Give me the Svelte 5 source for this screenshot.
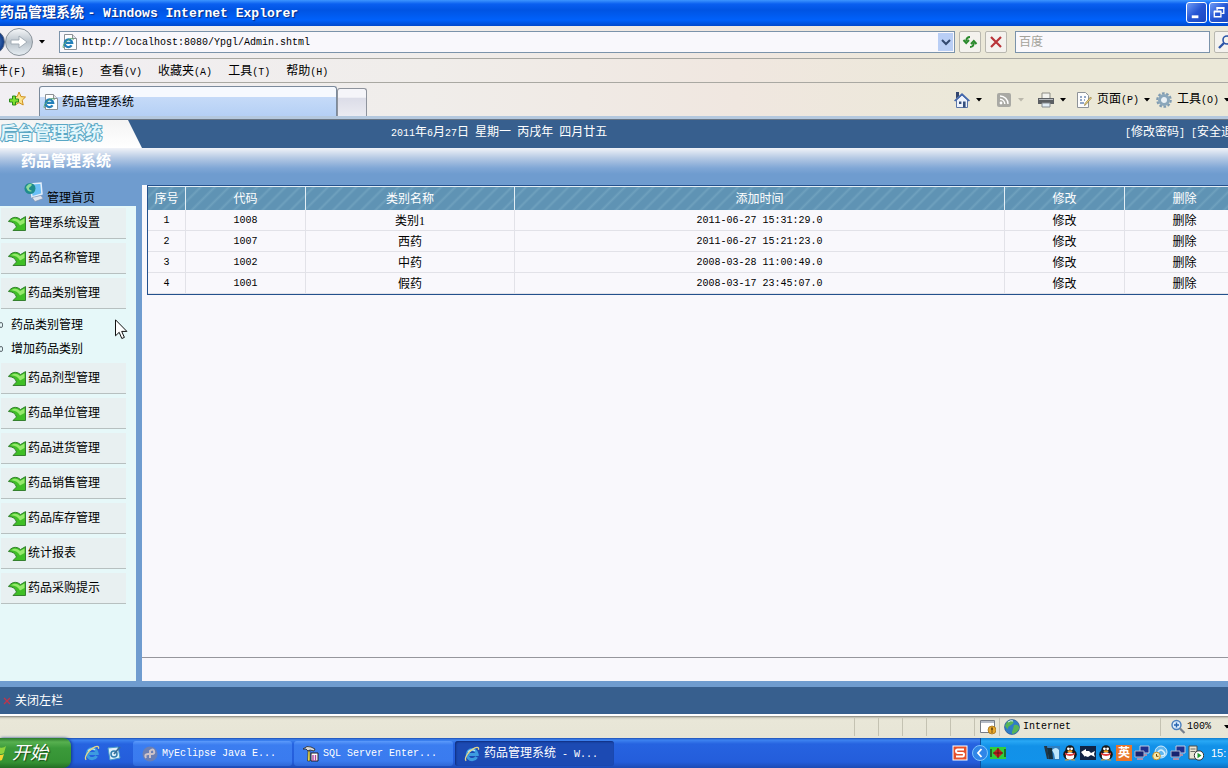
<script>
  const menus = [
    ['件', '(F)'],
    ['编辑', '(E)'],
    ['查看', '(V)'],
    ['收藏夹', '(A)'],
    ['工具', '(T)'],
    ['帮助', '(H)']
  ];

  const columns = ['序号', '代码', '类别名称', '添加时间', '修改', '删除'];

  const rows = [
    { code: '1008', name: '类别1', time: '2011-06-27 15:31:29.0' },
    { code: '1007', name: '西药', time: '2011-06-27 15:21:23.0' },
    { code: '1002', name: '中药', time: '2008-03-28 11:00:49.0' },
    { code: '1001', name: '假药', time: '2008-03-17 23:45:07.0' }
  ];

  let sections = $state([
    { title: '管理系统设置', open: false, items: [] },
    { title: '药品名称管理', open: false, items: [] },
    { title: '药品类别管理', open: true, items: ['药品类别管理', '增加药品类别'] },
    { title: '药品剂型管理', open: false, items: [] },
    { title: '药品单位管理', open: false, items: [] },
    { title: '药品进货管理', open: false, items: [] },
    { title: '药品销售管理', open: false, items: [] },
    { title: '药品库存管理', open: false, items: [] },
    { title: '统计报表', open: false, items: [] },
    { title: '药品采购提示', open: false, items: [] }
  ]);

  let address = $state('http://localhost:8080/Ypgl/Admin.shtml');
  let keyword = $state('');
  let showSidebar = $state(true);
</script>

{#snippet ieLogo()}
  <svg class="icon" viewBox="0 0 16 16" aria-hidden="true">
    <path d="M12.6 11A5 5 0 1 1 13.2 8.4H5" fill="none" stroke="#3d9be0" stroke-width="3" />
    <path d="M4 5.8A5 5 0 0 1 11 4.8" fill="none" stroke="#b5e6fa" stroke-width="1.3" />
    <path d="M2.2 14.8C-.2 12.6 3.6 6.6 8.4 3.4 11.8 1 15.4.4 14.4 3.8" fill="none" stroke="#e6d789" stroke-width="1.3" />
  </svg>
{/snippet}

{#snippet pageLogo()}
  <svg class="icon" viewBox="0 0 16 16" aria-hidden="true">
    <path d="M2.5.5h8l4 4v11h-12z" fill="#fff" stroke="#8c9196" />
    <path d="M10.5.5v4h4" fill="#dfe3e8" stroke="#8c9196" />
    <path d="M9.6 11.4A3.8 3.8 0 1 1 10.2 8.8H4" fill="none" stroke="#237fb9" stroke-width="2.2" />
    <path d="M1.6 14C0 12.400 3 8 6.600 5.600 9.400 4 11.800 4 11 6" fill="none" stroke="#54a36a" />
  </svg>
{/snippet}

{#snippet caret()}
  <svg class="caret" viewBox="0 0 6 4" aria-hidden="true"><path d="M0 0h6L3 3.5z" /></svg>
{/snippet}

{#snippet penguin()}
  <svg class="icon" viewBox="0 0 16 16" aria-hidden="true">
    <ellipse cx="8" cy="9.500" rx="6.800" ry="5.500" fill="#181818" />
    <ellipse cx="8" cy="5" rx="4.600" ry="4.800" fill="#181818" />
    <ellipse cx="8" cy="11" rx="4.200" ry="3.800" fill="#fff" />
    <circle cx="6.400" cy="3.800" r="1.400" fill="#fff" /><circle cx="9.600" cy="3.800" r="1.400" fill="#fff" />
    <ellipse cx="8" cy="6.300" rx="2.600" ry="1" fill="#f6a21b" />
    <path d="M3 7.400c3 2.200 7 2.200 10 0v2.200c-3 1.800-7 1.800-10 0z" fill="#e23b3b" />
    <path d="M2.500 15.500q2-2.500 5-.2zM8.500 15.300q3-2.300 5 .2z" fill="#f6a21b" />
  </svg>
{/snippet}

{#snippet monitors()}
  <svg class="icon" viewBox="0 0 16 16" aria-hidden="true">
    <path d="M6 1h9v7H6z" fill="#1d2f8e" stroke="#c3cbe0" />
    <path d="M1 6h9v6H1z" fill="#17236f" stroke="#aab4cf" />
    <path d="M3 14h6M10 10h3" stroke="#d78f9c" stroke-width="1.6" />
  </svg>
{/snippet}

<div class="screen">
  <header class="titlebar">
    <h1>药品管理系统 <span class="en">- Windows Internet Explorer</span></h1>
    <div class="window-buttons">
      <button aria-label="最小化">
        <svg viewBox="0 0 20 20"><path d="M5 14.5h7" stroke="#fff" stroke-width="3" /></svg>
      </button>
      <button aria-label="还原">
        <svg viewBox="0 0 20 20" fill="none" stroke="#fff">
          <path d="M7.5 8V5h7v6H12" stroke-width="1.4" /><path d="M7 5.2h8M4 9h8" stroke-width="2" /><path d="M4.5 9v5.5h7V9" stroke-width="1.4" />
        </svg>
      </button>
    </div>
  </header>

  <div class="chrome">
    <div class="address-row">
      <div class="nav-buttons">
        <button class="back" aria-label="后退"></button>
        <button class="forward" aria-label="前进">
          <svg viewBox="0 0 24 24"><path d="M4 10h8V6l8 6-8 6v-4H4z" fill="#fff" stroke="#a3adb6" /></svg>
        </button>
        <button class="history" aria-label="最近的网页">{@render caret()}</button>
      </div>
      <div class="address">
        {@render pageLogo()}
        <input class="en" aria-label="地址" bind:value={address} />
        <button aria-label="显示地址栏下拉列表">
          <svg viewBox="0 0 10 10"><path d="M1 3l4 4 4-4" fill="none" stroke="#33496f" stroke-width="2" /></svg>
        </button>
      </div>
      <button class="tool" aria-label="刷新">
        <svg viewBox="0 0 16 16" fill="none" stroke="#2b8a2d" stroke-width="2">
          <path d="M8 3Q4.500 3 4.200 7" /><path d="M1.500 6l2.700 3L7 6" />
          <path d="M8 13q3.500 0 3.800-4" /><path d="M9 10l2.800-3 2.700 3" />
        </svg>
      </button>
      <button class="tool" aria-label="停止">
        <svg viewBox="0 0 16 16"><path d="M3 3l10 10M13 3L3 13" stroke="#b93438" stroke-width="2.2" /></svg>
      </button>
      <input class="search" aria-label="搜索" placeholder="百度" bind:value={keyword} />
      <button class="tool go" aria-label="搜索网页">
        <svg viewBox="0 0 16 16" fill="none" stroke="#2c55a8"><circle cx="10" cy="6" r="4" stroke-width="1.6" /><path d="M7 9l-5 5" stroke-width="2.4" /></svg>
      </button>
    </div>

    <nav class="menubar" aria-label="菜单栏">
      {#each menus as [label, key]}
        <button>{label}<span class="en">{key}</span></button>
      {/each}
    </nav>

    <div class="tab-row">
      <button class="favorite" aria-label="添加到收藏夹">
        <svg viewBox="0 0 18 18">
          <path d="M11 1l2 4.6 4.5.4-3.3 3.2 1 4.8-4.2-2.4-3.7 2.4.8-5L5 6l4.3-.6z" fill="#fbe38a" stroke="#cf8f1b" />
          <path d="M4.5 5h3v3h3v3h-3v3h-3v-3h-3V8h3z" fill="#7de02e" stroke="#2b8a1e" />
        </svg>
      </button>
      <div class="tabs" role="tablist">
        <button class="tab" role="tab" aria-selected="true">{@render pageLogo()}药品管理系统</button>
        <button class="new-tab" aria-label="新选项卡"></button>
      </div>
      <div class="commands">
        <button aria-label="主页">
          <svg class="icon" viewBox="0 0 16 16">
            <path d="M2.5 8v7.5h11V8L8 3z" fill="#eef3fc" stroke="#5b76a8" />
            <path d="M0 8.5l8-7.5 8 7.5-1.2 1L8 3.6 1.2 9.5z" fill="#4468ad" />
            <path d="M2 0h3v4L2 6.500z" fill="#33466e" /><path d="M5 9.5h2.4V12H5zM9 9.5h2.6v6H9z" fill="#35507f" />
          </svg>
          {@render caret()}
        </button>
        <button aria-label="源" disabled>
          <svg class="icon" viewBox="0 0 16 16">
            <rect x="1" y="1" width="14" height="14" rx="2" fill="#a9a9a4" />
            <circle cx="5" cy="11" r="1.4" fill="#fff" /><path d="M4 7.2A5 5 0 0 1 8.8 12M4 4A8 8 0 0 1 12 12" fill="none" stroke="#fff" stroke-width="1.5" />
          </svg>
          {@render caret()}
        </button>
        <button aria-label="打印">
          <svg class="icon" viewBox="0 0 16 16">
            <path d="M4 1h8v6H4z" fill="#f2f2ee" stroke="#8d8d86" /><path d="M0 6h16v6H0z" fill="#5c5f63" />
            <path d="M1 7.5h14" stroke="#b6babd" /><path d="M4 11h8v4H4z" fill="#e3edf6" stroke="#868b90" />
          </svg>
          {@render caret()}
        </button>
        <button>
          <svg class="icon" viewBox="0 0 16 16">
            <path d="M1.500 .5h8l3 3v12h-11z" fill="#fdfdfd" stroke="#8e9398" />
            <path d="M4 5h2M8 5h2M4 8h2M8 8h1M4 11h4" stroke="#6f8bb6" stroke-width="1.4" />
            <path d="M15.500 6L10 12.500l-1.500 1 .5-2L14.500 5z" fill="#f4d67a" stroke="#8b7a45" stroke-width=".7" />
          </svg>
          <span>页面<span class="en">(P)</span></span>{@render caret()}
        </button>
        <button>
          <svg class="icon" viewBox="0 0 16 16">
            <circle cx="8" cy="8" r="6.700" fill="none" stroke="#7f9bb1" stroke-width="2.200" stroke-dasharray="2.600 1.600" />
            <circle cx="8" cy="8" r="4.500" fill="#e9f0f5" stroke="#8ba7bb" stroke-width="3" />
          </svg>
          <span>工具<span class="en">(O)</span></span>{@render caret()}
        </button>
      </div>
    </div>
  </div>

  <div class="page">
    <div class="banner">
      <div class="logo"><strong>后台管理系统</strong></div>
      <p class="date"><span class="en">2011</span>年<span class="en">6</span>月<span class="en">27</span>日<span class="en">&nbsp;</span>星期一<span class="en">&nbsp;</span>丙戌年<span class="en">&nbsp;</span>四月廿五</p>
      <div class="account">
        <a href="#password"><span class="en">[</span>修改密码<span class="en">]</span></a>
        <a href="#logout"><span class="en">[</span>安全退出<span class="en">]</span></a>
      </div>
    </div>
    <div class="subtitle"><h2>药品管理系统</h2></div>

    <div class="main">
      {#if showSidebar}
        <aside class="sidebar">
          <a class="home" href="#home">
            <svg viewBox="0 0 20 20" aria-hidden="true">
              <path d="M6 2l11-1 1 11-10 3z" fill="#6cc0f7" stroke="#e4eefa" stroke-width="1.500" />
              <path d="M8 15.500l9-2 2 3-8 3z" fill="#dfe5ef" stroke="#8392aa" stroke-width=".6" />
              <circle cx="6" cy="6.500" r="5.500" fill="#1f8c8c" /><path d="M2 5q3-4 5-3t-1 3 2 4q-4 2-6-4" fill="#8edc9b" />
            </svg>
            管理首页
          </a>
          <nav class="side-menu" aria-label="管理菜单">
            {#each sections as section}
              <button class="section" aria-expanded={section.open} onclick={() => (section.open = !section.open)}>
                <svg viewBox="0 0 18 15" aria-hidden="true">
                  <path d="M.5 5.500C3 1.500 8-.5 12.500 3.600L17.500.6v13.900H5L8.500 11C7.500 7.500 4.500 5.600.5 5.500z" fill="#3fbf26" stroke="#35802f" />
                  <path d="M3 4.300C5.500 2.200 9 2 12 5l4.500-2.500v4.500L12 9.500C10.500 6.500 7.500 4.600 3 4.300z" fill="#96e96c" />
                </svg>
                {section.title}
              </button>
              {#if section.open}
                <ul>
                  {#each section.items as item}
                    <li><a href="#category">{item}</a></li>
                  {/each}
                </ul>
              {/if}
            {/each}
          </nav>
        </aside>
      {/if}

      <main class="content">
        <div class="list">
          <table>
            <colgroup>
              <col class="c-no" /><col class="c-act" /><col class="c-name" /><col /><col class="c-act" /><col class="c-act" />
            </colgroup>
            <thead>
              <tr>
                {#each columns as column}
                  <th>{column}</th>
                {/each}
              </tr>
            </thead>
            <tbody>
              {#each rows as row, i}
                <tr>
                  <td class="en">{i + 1}</td>
                  <td class="en">{row.code}</td>
                  <td>{row.name}</td>
                  <td class="en">{row.time}</td>
                  <td><a href="#edit">修改</a></td>
                  <td><a href="#delete">删除</a></td>
                </tr>
              {/each}
            </tbody>
          </table>
        </div>
        <div class="pager"></div>
      </main>
    </div>

    <div class="page-footer">
      <button onclick={() => (showSidebar = !showSidebar)}>
        <svg viewBox="0 0 8 8" aria-hidden="true"><path d="M1 1l6 6M7 1L1 7" stroke="#c0344a" stroke-width="1.300" /></svg>
        关闭左栏
      </button>
    </div>
  </div>

  <div class="statusbar">
    {#each Array(5) as _}
      <span class="pane"></span>
    {/each}
    <span class="pane notice">
      <svg class="icon" viewBox="0 0 16 16" aria-hidden="true">
        <path d="M.5 1.500h14v12H.5z" fill="#fff" stroke="#777d85" /><path d="M1 3h13" stroke="#b4bbc6" stroke-width="2" />
        <circle cx="12" cy="11" r="4" fill="#e9a92c" stroke="#9a6a12" stroke-width=".7" /><path d="M12 8.500v3M12 12.500v1" stroke="#4c3207" stroke-width="1.400" />
      </svg>
    </span>
    <span class="pane zone">
      <svg class="icon" viewBox="0 0 16 16" aria-hidden="true">
        <circle cx="8" cy="8" r="7.500" fill="#2f7cc7" stroke="#1d4f86" stroke-width=".6" />
        <path d="M3 3q4-3 6-1t-2 4-3 4-3-3zM10 6q4-1 5 2t-4 6-2-4z" fill="#57b556" />
        <path d="M4 3q3-2 5-1" stroke="#d8eefc" fill="none" />
      </svg>
      <span class="en">Internet</span>
    </span>
    <button class="pane zoom">
      <svg class="icon" viewBox="0 0 16 16" aria-hidden="true">
        <circle cx="6.500" cy="6" r="4.500" fill="#d9ebfb" stroke="#4a7fbd" stroke-width="1.400" />
        <path d="M6.500 3.500v5M4 6h5" stroke="#2563b0" stroke-width="1.400" /><path d="M10 9.500l4.500 4.500" stroke="#77808c" stroke-width="2.200" />
      </svg>
      <span class="en">100%</span>
      {@render caret()}
    </button>
  </div>

  <footer class="taskbar">
    <button class="start">
      <svg viewBox="0 0 10 16" aria-hidden="true"><path d="M0 2q5 2 8-1L6 8q-3 2-6 0z" fill="#8fd33d" /><path d="M0 9q3 2 6 0l-2 6q-2 1-4 0z" fill="#f8d430" /></svg>
      开始
    </button>
    <div class="quick">
      <button aria-label="Internet Explorer">{@render ieLogo()}</button>
      <button aria-label="显示桌面">
        <svg class="icon" viewBox="0 0 16 16">
          <path d="M2 3l10-1 2 11-10 2z" fill="#dff0fb" stroke="#4a9cc9" /><circle cx="8" cy="9" r="3" fill="none" stroke="#2f7dae" stroke-width="1.500" />
          <path d="M8 9l6-7" stroke="#3a6e96" stroke-width="1.800" />
        </svg>
      </button>
    </div>
    <div class="tasks">
      <button>
        <svg class="icon" viewBox="0 0 16 16" aria-hidden="true">
          <circle cx="8" cy="8" r="7.500" fill="#6a7fb4" /><path d="M4 12q-2-4 2-4h4q3 0 2-3T8 5v7" fill="none" stroke="#cdc3c9" stroke-width="2" />
        </svg>
        <span class="en">MyEclipse Java E...</span>
      </button>
      <button>
        <svg class="icon" viewBox="0 0 16 16" aria-hidden="true">
          <path d="M0 3q4-4 8-2l4 2-1 2-4-1-2 1-2-2z" fill="#d9d9d9" stroke="#222" stroke-width=".8" />
          <path d="M5 5l2 0v10H4.500z" fill="#f2e14c" stroke="#222" stroke-width=".6" />
          <path d="M8 7h7v8H8z" fill="#fff" stroke="#222" /><path d="M10 9v6M12.500 9v6" stroke="#b0449c" stroke-width="1.400" />
        </svg>
        <span class="en">SQL Server Enter...</span>
      </button>
      <button class="active">
        {@render ieLogo()}
        <span>药品管理系统<span class="en">&nbsp;- W...</span></span>
      </button>
    </div>
    <div class="input-method">
      <svg class="icon" viewBox="0 0 16 16" aria-label="输入法">
        <rect x="1" y="1" width="14" height="14" fill="#e5512c" stroke="#fff" />
        <path d="M12 4.500H5.500q-1.500 0-1.500 1.600T5.500 8h5q1.500 0 1.500 1.700T10.500 11.500H4" fill="none" stroke="#fff" stroke-width="2" />
      </svg>
    </div>
    <div class="tray">
      <button class="expand" aria-label="显示隐藏的图标">
        <svg viewBox="0 0 16 16"><circle cx="8" cy="8" r="7.500" fill="#2f86e8" stroke="#7fc4fb" /><path d="M9.500 4L6 8l3.500 4" fill="none" stroke="#fff" stroke-width="1.800" /></svg>
      </button>
      <svg class="icon" viewBox="0 0 16 16" aria-hidden="true">
        <path d="M0 2h16v12H0z" fill="#2fcf3e" /><path d="M1 4v8M15 4v8" stroke="#111" /><path d="M8 3l5 5-5 5-5-5z" fill="#c2221f" /><path d="M8 3v10M3 8h10" stroke="#401010" stroke-width=".7" />
      </svg>
      <div class="tray-icons">
        <svg class="icon" viewBox="0 0 16 16" aria-hidden="true">
          <path d="M0 1h5v13H3z" fill="#243642" /><path d="M3 1h13v14H5z" fill="#2d7fc2" /><path d="M3 3h5l1 11H5z" fill="#14303f" /><path d="M8 5q4-4 7 0v9h-4q0-5-3-9z" fill="#bfe6fb" />
        </svg>
        {@render penguin()}
        <svg class="icon" viewBox="0 0 16 16" aria-hidden="true">
          <path d="M0 1h16v14H0z" fill="#102345" /><path d="M1 7l5-3v2h3l2 2 4-2-1 3 1 3-4-2-3 2-3-1v1z" fill="#fff" />
        </svg>
        {@render penguin()}
        <span class="lang">英</span>
        {@render monitors()}
        <svg class="icon" viewBox="0 0 16 16" aria-hidden="true">
          <circle cx="9" cy="7" r="6" fill="#5fb6ef" stroke="#d4ecfb" /><path d="M6 7q3-4 6 0t-4 4" fill="none" stroke="#d9f1ff" stroke-width="1.500" />
          <circle cx="4.500" cy="11" r="3.800" fill="#f8e9a8" stroke="#c9932a" /><path d="M4.500 9v2.300h2" fill="none" stroke="#6b4a10" />
        </svg>
        {@render monitors()}
        <svg class="icon" viewBox="0 0 16 16" aria-hidden="true">
          <path d="M1 1h8v13H1z" fill="#e8e4d4" stroke="#4d4d48" /><path d="M2.500 4h5M2.500 6.500h5" stroke="#6b6b64" />
          <circle cx="11" cy="10.500" r="4.700" fill="#fff" stroke="#333" /><path d="M9.500 7.800l4 2.700-4 2.700z" fill="#1f9a2c" />
        </svg>
      </div>
      <time>15:</time>
    </div>
  </footer>

  <svg class="cursor" viewBox="0 0 13 21" aria-hidden="true">
    <path d="M.5.800v16l3.700-3.500 2.600 6.200 2.600-1.100-2.700-6h5.200z" fill="#fff" stroke="#111" />
  </svg>
</div>

<style>
  :global(body) {
    margin: 0;
  }

  .screen {
    position: relative;
    display: flex;
    flex-direction: column;
    min-height: 100vh;
    overflow: hidden;
    font: 12px/16px 'Liberation Serif', 'Noto Sans CJK SC', sans-serif;
    color: #000;
  }

  .screen :is(button, input) {
    margin: 0;
    padding: 0;
    border: 0;
    background: none;
    font: inherit;
    color: inherit;
    white-space: nowrap;
  }

  .screen a {
    color: inherit;
    text-decoration: none;
  }

  .screen .en {
    font-family: 'Liberation Mono', monospace;
    font-size: 10px;
  }

  svg {
    display: block;
    flex: none;
  }

  .icon {
    width: 16px;
    height: 16px;
  }

  .caret {
    width: 6px;
    height: 4px;
  }

  /* browser window */
  .titlebar {
    display: flex;
    justify-content: space-between;
    height: 26px;
    background: linear-gradient(#3d95ff 0, #0a5ff0 4px, #0054e3 10px, #0061fb 20px, #0048cc 26px);
  }

  .titlebar h1 {
    margin: 0;
    font-size: 14px;
    line-height: 26px;
    color: #fff;
    text-shadow: 1px 1px 1px #0a2a80;
    white-space: nowrap;
  }

  .screen .titlebar .en {
    font-size: 13px;
  }

  .window-buttons {
    display: flex;
    gap: 2px;
    margin-right: -2px;
    padding-top: 2px;
  }

  .screen .window-buttons button {
    box-sizing: border-box;
    width: 21px;
    height: 21px;
    border: 1px solid #fff;
    border-radius: 3px;
    background: linear-gradient(135deg, #6f9bf6, #2455d4 50%, #1c48c0);
  }

  .window-buttons svg {
    width: 19px;
    height: 19px;
  }

  .chrome {
    background: linear-gradient(90deg, #f1eff3 0, #f0edea 35%, #f0e7e0 60%, #ebe8d8 80%);
    border-bottom: 1px solid #6a7684;
  }

  .address-row {
    display: flex;
    align-items: center;
    height: 32px;
    border-bottom: 1px solid #a9a8a2;
  }

  .nav-buttons {
    display: flex;
    align-items: center;
    width: 59px;
  }

  .screen .back {
    width: 24px;
    height: 24px;
    margin-left: -19px;
    border: 1px solid #5b6c86;
    border-radius: 50%;
    background: radial-gradient(#5d9be8, #123a85 70%);
  }

  .screen .forward {
    width: 28px;
    height: 28px;
    padding: 1px;
    border: 1px solid #8b949c;
    border-radius: 50%;
    background: linear-gradient(#f4f6f8, #b9c2ca 50%, #e6edf2);
  }

  .screen .history {
    padding: 6px;
  }

  .address {
    display: flex;
    flex: 1;
    align-items: center;
    box-sizing: border-box;
    height: 22px;
    padding: 0 1px 0 2px;
    border: 1px solid #7b93aa;
    background: #f9f8fc;
  }

  .screen .address input {
    flex: 1;
    min-width: 0;
    padding: 2px 0 0 4px;
    outline: 0;
  }

  .screen .address button {
    display: flex;
    align-items: center;
    justify-content: center;
    width: 15px;
    height: 18px;
    background: #b9cef5;
  }

  .address button svg {
    width: 10px;
    height: 10px;
  }

  .screen .tool {
    display: flex;
    align-items: center;
    justify-content: center;
    flex: none;
    box-sizing: border-box;
    width: 22px;
    height: 22px;
    margin-left: 4px;
    border: 1px solid #b9b8b0;
    border-radius: 2px;
    background: #f4f2ee;
  }

  .tool svg {
    width: 16px;
    height: 16px;
  }

  .screen .search {
    box-sizing: border-box;
    width: 195px;
    height: 22px;
    margin-left: 8px;
    padding: 0 3px;
    border: 1px solid #7b93aa;
    background: #f9f8fc;
  }

  .search::placeholder {
    color: #a3a29a;
    opacity: 1;
  }

  .screen .go {
    margin-right: -8px;
  }

  .menubar {
    display: flex;
    gap: 16px;
    box-sizing: border-box;
    height: 24px;
    margin-left: -4px;
    padding-top: 2px;
    border-bottom: 1px solid #a9a8a2;
  }

  .tab-row {
    display: flex;
    align-items: flex-end;
    height: 33px;
    border-bottom: 3px solid #b4c8de;
  }

  .favorite {
    align-self: center;
    width: 39px;
  }

  .favorite svg {
    width: 18px;
    height: 18px;
    margin-left: 8px;
  }

  .tabs {
    display: flex;
    flex: 1;
    align-items: flex-end;
  }

  .screen .tab {
    display: flex;
    align-items: center;
    gap: 3px;
    box-sizing: border-box;
    width: 298px;
    height: 30px;
    padding: 0 3px;
    border: 1px solid #7b8a9c;
    border-bottom: 0;
    border-radius: 3px 3px 0 0;
    background: linear-gradient(#f6f9fe 35%, #c5daf8 36%, #b5d0f5);
  }

  .screen .new-tab {
    box-sizing: border-box;
    width: 30px;
    height: 28px;
    border: 1px solid #8e939c;
    border-bottom: 0;
    border-radius: 3px 3px 0 0;
    background: linear-gradient(#f5f5f9 30%, #dcdde8 35%, #ebebf1);
  }

  .commands {
    display: flex;
    align-self: center;
    gap: 10px;
    margin-right: -2px;
  }

  .commands button {
    display: flex;
    align-items: center;
    gap: 6px;
  }

  .commands button:not([aria-label]) {
    gap: 5px;
  }

  .commands button:disabled .caret {
    opacity: 0.2;
  }

  .screen .commands button:nth-child(-n + 2) {
    margin-right: 4px;
  }

  .screen .commands button:nth-child(5) {
    margin-left: -4px;
  }

  /* web page */
  .page {
    display: flex;
    flex: 1;
    flex-direction: column;
    background: #6f9ccf;
  }

  .banner {
    display: flex;
    height: 28px;
    line-height: 24px;
    background: #375f8e;
    color: #fff;
  }

  .logo {
    flex: none;
    width: 142px;
    background: linear-gradient(#f4f4f4, #fff);
    clip-path: polygon(0 0, 128px 0, 142px 100%, 0 100%);
  }

  .logo strong {
    font-size: 17px;
    line-height: 28px;
    color: #e4f7fc;
    -webkit-text-stroke: 2px #5aa7c4;
    paint-order: stroke fill;
  }

  .date {
    flex: 1;
    margin: 0 0 0 249px;
  }

  .account {
    display: flex;
    gap: 6px;
    margin-right: -23px;
    white-space: nowrap;
  }

  .subtitle {
    height: 30px;
    background: linear-gradient(#f1f3f8, #b5c9e4 10px, #80a7d6 20px, #6f9ccf 26px);
  }

  .subtitle h2 {
    margin: 0 0 0 21px;
    font-size: 15px;
    line-height: 26px;
    color: #fff;
  }

  .main {
    display: flex;
    flex: 1;
  }

  .sidebar {
    display: flex;
    flex-direction: column;
    width: 136px;
    margin-right: 6px;
  }

  .home {
    display: flex;
    align-items: flex-end;
    gap: 3px;
    height: 28px;
    padding-left: 24px;
  }

  .home svg {
    align-self: center;
    width: 20px;
    height: 20px;
  }

  .side-menu {
    flex: 1;
    padding: 2px 10px 2px 1px;
    background: #e6f8f9;
  }

  .screen .section {
    display: flex;
    align-items: center;
    gap: 2px;
    box-sizing: border-box;
    width: 100%;
    height: 31px;
    margin-bottom: 4px;
    padding-left: 7px;
    border-bottom: 1px solid #b7c0c0;
    background: #e8f0f1;
  }

  .section svg {
    width: 18px;
    height: 15px;
  }

  .side-menu ul {
    margin: 0 0 2px;
    padding: 0;
    list-style: none;
  }

  .side-menu li {
    display: flex;
    align-items: center;
    gap: 8px;
    height: 24px;
    margin-left: -2px;
  }

  .side-menu li::before {
    content: '';
    width: 2px;
    height: 4px;
    border: 1px solid #5e6a70;
    border-radius: 2px;
  }

  .content {
    display: flex;
    flex: 1;
    flex-direction: column;
    min-width: 0;
    margin-top: 7px;
    background: #f9f8fc;
  }

  .list {
    flex: 1;
    padding-left: 5px;
    margin-right: -18px;
  }

  table {
    width: 100%;
    table-layout: fixed;
    border-collapse: separate;
    border-spacing: 0;
    border: 1px solid #24518d;
    text-align: center;
  }

  .c-no {
    width: 38px;
  }

  .c-act {
    width: 120px;
  }

  .c-name {
    width: 209px;
  }

  thead tr {
    background: repeating-linear-gradient(135deg, #5f93b4 0 6px, #6fa1be 8px, #5f93b4 10px);
  }

  th {
    height: 23px;
    padding: 0;
    border-top: 1px solid #e3eef5;
    border-right: 1px solid #e3eef5;
    font-weight: normal;
    color: #fff;
  }

  td {
    height: 19px;
    padding: 1px 0 0;
    border-right: 1px solid #e2e2e8;
    border-bottom: 1px solid #e2e2e8;
  }

  .pager {
    height: 23px;
    border-top: 1px solid #96969c;
  }

  .page-footer {
    margin-top: 6px;
    background: #375f8e;
    color: #fff;
  }

  .screen .page-footer button {
    display: flex;
    align-items: center;
    gap: 4px;
    height: 27px;
    padding-left: 3px;
  }

  .page-footer svg {
    width: 8px;
    height: 8px;
  }

  /* status bar */
  .statusbar {
    display: flex;
    justify-content: flex-end;
    align-items: center;
    box-sizing: border-box;
    height: 24px;
    border-top: 2px solid #fff;
    background: linear-gradient(#85847c 0, #d8d6c8 2px, #e9e7d8 4px, #e7e5d6);
  }

  .screen .pane {
    box-sizing: border-box;
    display: flex;
    align-items: center;
    width: 24px;
    height: 18px;
    border-left: 1px solid #c4c2b2;
  }

  .screen .notice {
    width: 25px;
    padding-left: 5px;
  }

  .screen .zone {
    gap: 3px;
    width: 161px;
    padding-left: 4px;
  }

  .screen .zoom {
    gap: 1px;
    width: 68px;
    padding-left: 9px;
  }

  .zoom .caret {
    margin-left: 12px;
  }

  /* taskbar */
  .taskbar {
    display: flex;
    height: 30px;
    background: linear-gradient(#1d4fb4 0, #3d83f0 2px, #2663e0 6px, #245ddb 24px, #1d4ab4);
    color: #fff;
  }

  .screen .start {
    display: flex;
    align-items: center;
    gap: 4px;
    width: 71px;
    border-radius: 0 8px 8px 0;
    background: linear-gradient(#2b7a2b, #57b04f 4px, #3b9a3a 10px, #359334 24px, #236e24);
    box-shadow: 1px 0 3px #12388d;
    font-size: 18px;
    font-style: italic;
    line-height: 28px;
    text-shadow: 1px 1px 1px #174a17;
  }

  .start svg {
    width: 10px;
    height: 16px;
    margin-left: -2px;
  }

  .quick {
    display: flex;
    align-items: center;
    gap: 6px;
    width: 62px;
    box-sizing: border-box;
    padding-left: 13px;
  }

  .tasks {
    display: flex;
    flex: 1;
    gap: 2px;
    padding: 3px 0 2px;
  }

  .screen .tasks button {
    display: flex;
    align-items: center;
    gap: 4px;
    box-sizing: border-box;
    flex: 0 1 159px;
    padding-left: 9px;
    border-radius: 3px;
    background: linear-gradient(#5c9bfb, #3b7df0 4px, #3a7bef 20px, #2f68d6);
  }

  .screen .tasks .active {
    background: #1c4ab3;
    box-shadow: inset 1px 1px 2px #0f2e7d;
  }

  .input-method {
    display: flex;
    align-items: center;
    padding-right: 12px;
  }

  .tray {
    display: flex;
    align-items: center;
    width: 247px;
    background: linear-gradient(#0f7ed0, #28a8f5 3px, #1291e8 8px, #1192ea 24px, #0d6fc0);
    border-left: 1px solid #0b4f9c;
  }

  .screen .expand {
    margin: 0 2px 0 -9px;
  }

  .expand svg {
    width: 16px;
    height: 16px;
  }

  .tray-icons {
    display: flex;
    gap: 2px;
    margin-left: 38px;
  }

  .lang {
    width: 16px;
    background: #e8762b;
    font-weight: bold;
    text-align: center;
  }

  time {
    margin-left: 7px;
    font-family: 'Liberation Sans', sans-serif;
    font-size: 11px;
  }

  .cursor {
    position: absolute;
    top: 319px;
    left: 115px;
    width: 13px;
    height: 21px;
  }
</style>
